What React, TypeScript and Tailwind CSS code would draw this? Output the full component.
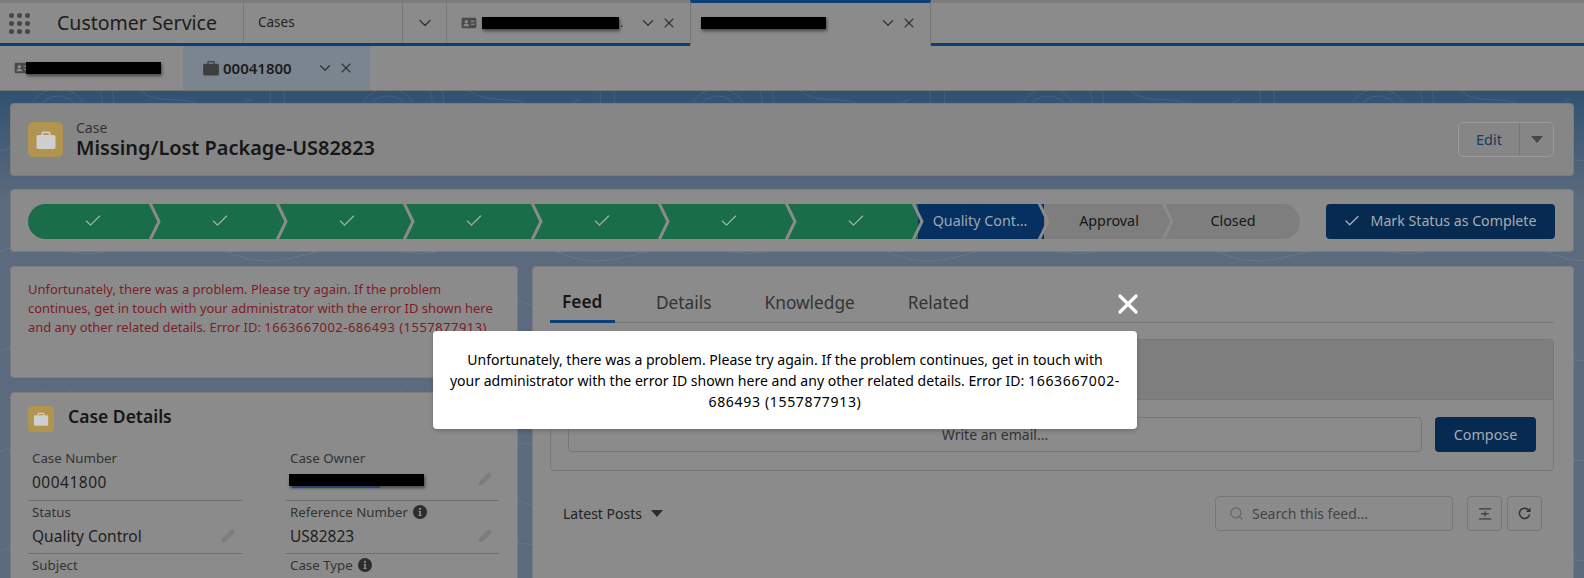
import React from 'react';
import { ChevronDown, X, Check, Search, Pencil } from 'lucide-react';

const FONT = "font-['Noto_Sans','Open_Sans',sans-serif]";

const Redaction = ({ className }: { className: string }) => (
  <span className={`block h-[12px] bg-black shadow-[1px_2px_3px_rgba(0,0,0,0.5)] ${className}`} />
);

const Briefcase = ({ className, fill }: { className: string; fill: string }) => (
  <svg viewBox="0 0 24 24" className={className} fill={fill}>
    <path d="M9 3.5h6a1.5 1.5 0 0 1 1.500 1.500V7h-1.700V5.200H9.200V7H7.500V5a1.500 1.500 0 0 1 1.500-1.500z" />
    <rect x="2.500" y="7" width="19" height="14" rx="1.800" />
  </svg>
);

const ContactCard = ({ className }: { className: string }) => (
  <svg viewBox="0 0 24 24" className={className}>
    <rect x="1" y="4" width="22" height="16" rx="2" fill="#4a4a4a" />
    <circle cx="8" cy="10" r="2.600" fill="#8a8a8a" />
    <path d="M3.500 17c0-2.600 2-4 4.500-4s4.500 1.400 4.500 4z" fill="#8a8a8a" />
    <rect x="14.500" y="8.500" width="6" height="1.800" fill="#8a8a8a" />
    <rect x="14.500" y="13" width="6" height="1.800" fill="#8a8a8a" />
  </svg>
);

const WaffleIcon = () => (
  <div className="grid grid-cols-3 gap-[3px]">
    {Array.from({ length: 9 }).map((_, i) => (
      <span key={i} className="w-[5px] h-[5px] rounded-full bg-[#474747]" />
    ))}
  </div>
);

const InfoDot = () => (
  <svg viewBox="0 0 14 14" className="w-[14px] h-[14px]">
    <circle cx="7" cy="7" r="7" fill="#2d2d2d" />
    <circle cx="7" cy="3.900" r="1.100" fill="#8b8b8b" />
    <path d="M5.600 6h2.300v3.900h.8v1.100H5.400V9.900h.9V7.100h-.7z" fill="#8b8b8b" />
  </svg>
);

const TabActions = () => (
  <div className="flex items-center gap-[4px] text-[#333]">
    <ChevronDown size={18} strokeWidth={1.6} />
    <X size={16} strokeWidth={1.6} />
  </div>
);

const StepSep = () => (
  <svg viewBox="0 0 14 35" className="absolute -right-[7px] top-0 w-[14px] h-[35px] z-10" fill="none">
    <path d="M2 -1 L11 17.500 L2 36" stroke="#8b8b8b" strokeWidth="3" />
  </svg>
);

const PathStep = ({ first }: { first?: boolean }) => (
  <div className={`relative flex-1 h-[35px] flex items-center justify-center pl-[3px] bg-[#1a6d49] ${first ? 'rounded-l-full' : ''}`}>
    <Check size={20} strokeWidth={1.3} className="text-[#a9b8b0]" />
    <StepSep />
  </div>
);

const Field = ({
  label,
  value,
  info,
  edit,
  redacted,
  width,
}: {
  label: string;
  value?: string;
  info?: boolean;
  edit?: boolean;
  redacted?: boolean;
  width: string;
}) => (
  <div className={`${width} h-[53.500px] border-b border-[#6f6f6f] pl-[4px] pr-[4px]`}>
    <div className="flex items-center gap-[5px] text-[13.300px] leading-[18px] pt-[2px] text-[#333]">
      {label}
      {info && <InfoDot />}
    </div>
    <div className="flex items-center justify-between text-[15.500px] leading-[24px] text-[#1e1e1e] pt-[3px] pr-[3px]">
      {redacted ? (
        <span className="block mt-[4px] -ml-[1px]">
          <Redaction className="w-[135px]" />
          <span className="block h-[2px] w-[88px] ml-[3px] bg-[#24466e]" />
        </span>
      ) : (
        <span>{value}</span>
      )}
      {edit && <Pencil size={14} fill="#7c7c7c" className="text-[#7c7c7c]" />}
    </div>
  </div>
);

// faint contour lines behind the panels
const Contours = () => (
  <svg className="absolute inset-0 w-full h-full" fill="none">
    <defs>
      <pattern id="topo" width="330" height="100" patternUnits="userSpaceOnUse">
        <g stroke="#ffffff" strokeOpacity="0.07">
          <ellipse cx="58" cy="18" rx="26" ry="20" />
          <ellipse cx="58" cy="18" rx="18" ry="13" />
          <path d="M50 18c6-6 14-2 16 2" />
          <path d="M100 0c6 20-2 30 4 40M112 0c4 12-2 28 6 44" />
          <path d="M140 0c20 14 40 4 60 14s30 4 50-6" />
          <path d="M0 60c40-14 70 10 110 0s80-14 120 2 60 4 100-4" />
          <path d="M270 0c2 14-4 30 2 44M284 0c2 14-2 26 2 40" />
        </g>
      </pattern>
    </defs>
    <rect width="100%" height="100%" fill="url(#topo)" />
  </svg>
);

const ModalOverlay = () => (
  <div className="absolute left-[433px] top-[331px] w-[704px] h-[98px] bg-white rounded-[4px] shadow-[0_2px_4px_rgba(0,0,0,0.2)] flex items-center justify-center text-center text-black text-[14.050px] leading-[21px] whitespace-nowrap pt-[1px] z-50">
    <p>
      Unfortunately, there was a problem. Please try again. If the problem continues, get in touch with
      <br />
      your administrator with the error ID shown here and any other related details. Error ID: <span className="tracking-[0.65px]">1663667002-</span>
      <br />
      <span className="tracking-[0.65px]">686493 (1557877913)</span>
    </p>
    <X size={32} strokeWidth={2.4} className="absolute -right-[7px] -top-[43px] text-white" />
  </div>
);

export default function App() {
  return (
    <div className={`relative w-[1584px] h-[578px] overflow-hidden bg-[#5a687b] ${FONT}`}>
      {/* top nav */}
      <div className="h-[46px] bg-[#8b8b8b] border-t-[3px] border-[#7d7d7d] border-b-[3px] border-b-[#0c3f75] flex relative">
        <div className="w-[244px] flex items-center border-r border-[#777] pl-[9px]">
          <WaffleIcon />
          <span className="ml-[27px] text-[19.500px] text-[#1c1c1c]">Customer Service</span>
        </div>
        <div className="w-[159px] flex items-center pl-[14px] border-r border-[#777] text-[13.500px] text-[#222] pb-[1px]">
          Cases
        </div>
        <div className="w-[44px] flex items-center justify-center border-r border-[#777] text-[#333]">
          <ChevronDown size={20} strokeWidth={1.6} />
        </div>
        <div className="w-[243px] flex items-center pl-[14px] pr-[13px]">
          <ContactCard className="w-[16px] h-[16px]" />
          <Redaction className="w-[137px] ml-[5px]" />
          <span className="text-[13px] text-[#333] ml-[1px] mr-auto">.</span>
          <TabActions />
        </div>
        <div className="w-[241px] h-[46px] -mt-[3px] border-t-[3px] border-[#0c3f75] border-x border-x-[#777] bg-[#8b8b8b] flex items-center pl-[10px] pr-[13px] justify-between pb-[3px] z-10">
          <Redaction className="w-[125px]" />
          <TabActions />
        </div>
      </div>

      {/* sub tabs */}
      <div className="h-[45px] bg-[#8b8b8b] border-b border-[#767676] flex">
        <div className="w-[183px] flex items-center pl-[14px]">
          <ContactCard className="w-[16px] h-[16px]" />
          <Redaction className="w-[135px] -ml-[4px]" />
        </div>
        <div className="w-[187px] bg-[#7a8590] flex items-center pl-[18px] pr-[16px]">
          <Briefcase className="w-[20px] h-[20px]" fill="#3f3f3f" />
          <span className="ml-[2px] text-[15px] font-semibold text-[#1c1c1c]">00041800</span>
          <span className="ml-auto"><TabActions /></span>
        </div>
      </div>

      {/* workspace background */}
      <div className="relative h-[487px] bg-gradient-to-b from-[#315171] to-[#5b6a7e] from-0% to-[22%]">
        <Contours />
        <div className="relative px-[10px] pt-[12px]">
          {/* highlights */}
          <div className="h-[73px] bg-[#868686] rounded-[4px] border border-[#7b7b7b] flex items-center pl-[17px] pr-[18px]">
            <div className="w-[35px] h-[35px] bg-[#b0944f] rounded-[5px] flex items-center justify-center">
              <Briefcase className="w-[24px] h-[24px]" fill="#cfcfcf" />
            </div>
            <div className="ml-[13px]">
              <div className="text-[14px] leading-[16px] text-[#333]">Case</div>
              <div className="text-[19.900px] leading-[24px] font-semibold text-[#161616]">Missing/Lost Package-US82823</div>
            </div>
            <div className="ml-auto flex h-[35px] border border-[#9a9a9a] rounded-[5px] mr-[1px]">
              <div className="w-[61px] flex items-center justify-center text-[14.500px] text-[#193a5e] border-r border-[#777]">Edit</div>
              <div className="w-[33px] flex items-center justify-center">
                <span className="w-0 h-0 border-x-[6px] border-x-transparent border-t-[7px] border-t-[#474747]" />
              </div>
            </div>
          </div>

          {/* path */}
          <div className="mt-[13px] h-[63px] bg-[#8b8b8b] rounded-[4px] border border-[#7d7d7d] flex items-center pl-[17px] pr-[18px] pt-[1px]">
            <div className="flex w-[1272px]">
              <div className="flex w-[890px]">
                <PathStep first />
                <PathStep />
                <PathStep />
                <PathStep />
                <PathStep />
                <PathStep />
                <PathStep />
              </div>
              <div className="relative w-[126px] h-[35px] pr-[2px] bg-[#06305f] flex items-center justify-center text-[14.300px] text-[#9aa9ba]">
                Quality Cont...
                <StepSep />
              </div>
              <div className="relative w-[124px] h-[35px] pl-[6px] bg-[#7e7e7e] flex items-center justify-center text-[14.300px] text-[#161616]">
                Approval
                <StepSep />
              </div>
              <div className="w-[132px] h-[35px] pr-[2px] bg-[#7e7e7e] rounded-r-full flex items-center justify-center text-[14.300px] text-[#161616]">
                Closed
              </div>
            </div>
            <div className="ml-auto w-[229px] h-[35px] bg-[#072a50] rounded-[4px] flex items-center justify-center gap-[10px] pr-[2px] text-[14.200px] text-[#a6acb3]">
              <Check size={18} strokeWidth={1.8} />
              Mark Status as Complete
            </div>
          </div>

          <div className="mt-[14px] flex gap-[14px]">
            {/* left column */}
            <div className="w-[508px] flex flex-col gap-[14px]">
              <div className="h-[112px] bg-[#8b8b8b] rounded-[4px] border border-[#7d7d7d] pl-[17px] pt-[13px] text-[12.950px] leading-[19px] text-[#7c1d26] whitespace-nowrap">
                Unfortunately, there was a problem. Please try again. If the problem
                <br />
                continues, get in touch with your administrator with the error ID shown here
                <br />
                and any other related details. Error ID: <span className="tracking-[0.5px]">1663667002-686493 (1557877913)</span>
              </div>
              <div className="h-[200px] bg-[#8b8b8b] rounded-[4px] border border-[#7d7d7d] pl-[17px] pt-[13px]">
                <div className="flex items-start gap-[14px] h-[26px]">
                  <div className="w-[26px] h-[26px] bg-[#b0944f] rounded-[4px] flex items-center justify-center">
                    <Briefcase className="w-[18px] h-[18px]" fill="#cfcfcf" />
                  </div>
                  <span className="text-[17.500px] leading-[24px] font-semibold text-[#161616] -mt-[2px]">Case Details</span>
                </div>
                <div className="flex flex-wrap gap-x-[44px] mt-[15px]">
                  <Field label="Case Number" value="00041800" width="w-[214px] [&>div:last-child]:tracking-[0.5px]" />
                  <Field label="Case Owner" redacted edit width="w-[213px]" />
                  <Field label="Status" value="Quality Control" edit width="w-[214px]" />
                  <Field label="Reference Number" info value="US82823" edit width="w-[213px]" />
                  <Field label="Subject" width="w-[214px]" />
                  <Field label="Case Type" info width="w-[213px]" />
                </div>
              </div>
            </div>

            {/* right column */}
            <div className="flex-1 h-[320px] bg-[#8b8b8b] rounded-[4px] border border-[#7d7d7d] pl-[17px] pr-[19px]">
              <div className="h-[56px] border-b border-[#777] flex items-end gap-[53px] text-[17.300px] text-[#333]">
                <div className="h-[44px] w-[65px] pl-[12px] border-b-[3px] border-[#0c3f75] -mb-[1px] font-semibold text-[#161616] flex items-center pt-[5px]">Feed</div>
                <div className="h-[44px] -ml-[12px] flex items-center pt-[5px]">Details</div>
                <div className="h-[44px] flex items-center pt-[5px]">Knowledge</div>
                <div className="h-[44px] flex items-center pt-[5px]">Related</div>
              </div>
              <div className="mt-[16px] h-[132px] border border-[#777] rounded-[4px] flex flex-col">
                <div className="h-[60px] bg-[#7e7e7e] border-b border-[#777] rounded-t-[4px]" />
                <div className="flex items-center gap-[13px] px-[17px] pt-[17px]">
                  <div className="flex-1 h-[35px] border border-[#777] rounded-[4px] flex items-center justify-center text-[14px] text-[#333]">
                    Write an email...
                  </div>
                  <div className="w-[101px] h-[35px] bg-[#072a50] rounded-[4px] flex items-center justify-center text-[14.300px] text-[#a6acb3]">
                    Compose
                  </div>
                </div>
              </div>
              <div className="mt-[25px] flex items-center pl-[13px] pr-[12px]">
                <span className="text-[14px] text-[#222]">Latest Posts</span>
                <span className="ml-[9px] w-0 h-0 border-x-[6px] border-x-transparent border-t-[7px] border-t-[#2d2d2d]" />
                <div className="ml-auto w-[238px] h-[35px] border border-[#777] rounded-[4px] flex items-center pl-[13px] gap-[8px] text-[14px] text-[#444]">
                  <Search size={15} className="text-[#666]" />
                  Search this feed...
                </div>
                <div className="ml-[14px] w-[35px] h-[35px] border border-[#777] rounded-[4px] flex items-center justify-center">
                  <svg viewBox="0 0 16 16" className="w-[14px] h-[14px]" fill="#333">
                    <rect x="1" y="1.500" width="14" height="1.300" />
                    <rect x="1" y="13" width="14" height="1.300" />
                    <rect x="3.500" y="7.200" width="9" height="1.300" />
                    <rect x="7.400" y="4.800" width="1.300" height="6" />
                  </svg>
                </div>
                <div className="ml-[5px] w-[35px] h-[35px] border border-[#777] rounded-[4px] flex items-center justify-center">
                  <svg viewBox="0 0 16 16" className="w-[15px] h-[15px]" fill="none">
                    <path d="M12.500 4.500A5.500 5.500 0 1 0 13.500 9" stroke="#333" strokeWidth="1.600" />
                    <path d="M14.500 1.500v5h-5z" fill="#333" />
                  </svg>
                </div>
              </div>
            </div>
          </div>
        </div>
      </div>

      <ModalOverlay />
    </div>
  );
}
